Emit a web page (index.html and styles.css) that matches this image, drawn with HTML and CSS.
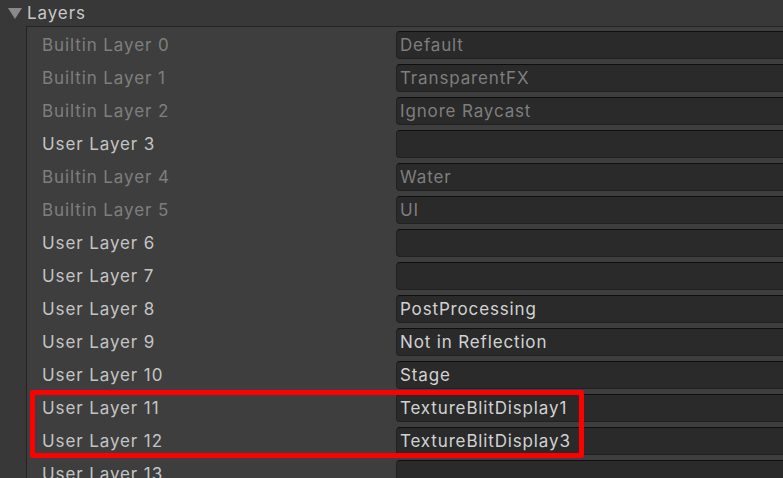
FILE: index.html
```html
<!DOCTYPE html>
<html>
<head>
<meta charset="utf-8">
<link rel="stylesheet" href="styles.css">
</head>
<body>
<div class="inspector">
  <div class="header">
    <svg class="fold" width="14" height="12" viewBox="0 0 14 12"><polygon points="0,0 14,0 7,11" fill="#8a8a8a"/></svg>
    <span class="title">Layers</span>
  </div>
  <div class="panel">
    <div class="row builtin"><span class="label">Builtin Layer 0</span><span class="field">Default</span></div>
    <div class="row builtin"><span class="label">Builtin Layer 1</span><span class="field">TransparentFX</span></div>
    <div class="row builtin"><span class="label">Builtin Layer 2</span><span class="field">Ignore Raycast</span></div>
    <div class="row user"><span class="label">User Layer 3</span><span class="field"></span></div>
    <div class="row builtin"><span class="label">Builtin Layer 4</span><span class="field">Water</span></div>
    <div class="row builtin"><span class="label">Builtin Layer 5</span><span class="field">UI</span></div>
    <div class="row user"><span class="label">User Layer 6</span><span class="field"></span></div>
    <div class="row user"><span class="label">User Layer 7</span><span class="field"></span></div>
    <div class="row user"><span class="label">User Layer 8</span><span class="field">PostProcessing</span></div>
    <div class="row user"><span class="label">User Layer 9</span><span class="field">Not in Reflection</span></div>
    <div class="row user"><span class="label">User Layer 10</span><span class="field">Stage</span></div>
    <div class="group">
      <div class="row user"><span class="label">User Layer 11</span><span class="field">TextureBlitDisplay1</span></div>
      <div class="row user"><span class="label">User Layer 12</span><span class="field">TextureBlitDisplay3</span></div>
      <div class="highlight"></div>
    </div>
    <div class="row user"><span class="label">User Layer 13</span><span class="field"></span></div>
  </div>
</div>
</body>
</html>
```
FILE: styles.css
```css
html, body {
  margin: 0;
  padding: 0;
  background: #383838;
  overflow: hidden;
}
.inspector {
  width: 783px;
  height: 478px;
  overflow: hidden;
  font-family: Inter, "Noto Sans", sans-serif;
  font-size: 17px;
}
.header {
  height: 26px;
  display: flex;
  align-items: center;
  padding-left: 8px;
  gap: 5px;
}
.fold {
  margin-top: 1px;
}
.title {
  color: #c8c8c8;
  font-size: 17px;
  letter-spacing: 0.9px;
}
.panel {
  margin-left: 26px;
  width: 800px;
  border-left: 1px solid #242424;
  border-top: 1px solid #242424;
  background: #3e3e3e;
  padding-top: 1px;
}
.row {
  height: 33px;
  display: flex;
  align-items: center;
}
.label {
  width: 354px;
  padding-left: 15px;
  letter-spacing: 0.9px;
}
.field {
  box-sizing: border-box;
  height: 28px;
  width: 420px;
  margin-top: 1px;
  background: #2a2a2a;
  border: 1px solid #212121;
  border-top-color: #0f0f0f;
  border-radius: 4px;
  padding-left: 3px;
  line-height: 26px;
  letter-spacing: 0.85px;
}
.builtin .label, .builtin .field {
  color: #7e7e7e;
}
.user .label {
  color: #c4c4c4;
}
.user .field {
  color: #d2d2d2;
}
.group {
  position: relative;
}
.highlight {
  position: absolute;
  left: 3px;
  top: -1px;
  width: 554px;
  height: 68px;
  box-sizing: border-box;
  border: 5px solid #ff0000;
  border-radius: 2px;
}
```
